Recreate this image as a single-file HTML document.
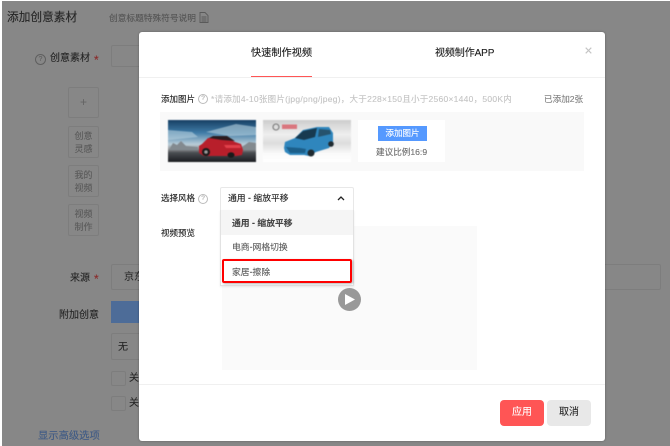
<!DOCTYPE html>
<html><head><meta charset="utf-8">
<style>
html,body{margin:0;padding:0;background:#fff}
#p{position:relative;width:670px;height:446px;overflow:hidden;background:#fff;font-family:"Liberation Sans","Noto Sans CJK SC",sans-serif;-webkit-text-stroke:.12px currentColor}
#b{position:absolute;left:2px;top:1px;width:668px;height:445px;background:#878787}
.t{position:absolute;white-space:nowrap;line-height:14px}
.a{position:absolute;box-sizing:border-box}
.bx{position:absolute;box-sizing:border-box;border:1px solid #7d7d7d;border-radius:2px}
.side{position:absolute;left:68px;width:31px;box-sizing:border-box;border:1px solid #7d7d7d;border-radius:2px;color:#5a5a5a;font-size:9px;line-height:12.5px;text-align:center;padding-top:3px}
.q{position:absolute;box-sizing:border-box;border-radius:50%;text-align:center;font-size:7px}
.im{filter:blur(.45px)}
</style></head><body><div id="p">
<div id="b"></div>

<div class="t" style="left:7px;top:10px;font-size:11.7px;line-height:16px;color:#262626">添加创意素材</div>
<div class="t" style="left:109px;top:11px;font-size:8.7px;color:#555">创意标题特殊符号说明</div>
<svg class="a" style="left:199px;top:12px" width="10" height="11" viewBox="0 0 10 11"><path d="M1 .5h5l3 3v7H1zM2.500 5h5M2.500 7h5M2.500 9h5" fill="none" stroke="#5a5a5a" stroke-width=".9"/></svg>
<div class="q" style="left:35px;top:54px;width:11px;height:11px;border:1px solid #5f5f5f;color:#5f5f5f;line-height:9px">?</div>
<div class="t" style="left:50px;top:52px;font-size:10px;color:#262626">创意素材</div>
<div class="t" style="left:94px;top:53px;font-size:12px;color:#8b2a2a">*</div>
<div class="bx" style="left:111px;top:45px;width:40px;height:22px"></div>

<div class="side" style="top:87px;height:31px;font-size:12px;line-height:29px;padding-top:0;color:#666">+</div>
<div class="side" style="top:126px;height:32px">创意<br>灵感</div>
<div class="side" style="top:165px;height:32px">我的<br>视频</div>
<div class="side" style="top:204px;height:32px">视频<br>制作</div>

<div class="t" style="left:70px;top:272px;font-size:10px;color:#262626">来源</div>
<div class="t" style="left:94px;top:272px;font-size:12px;color:#8b2a2a">*</div>
<div class="bx" style="left:111px;top:264px;width:550px;height:26px"></div>
<div class="t" style="left:124px;top:271px;font-size:10px;color:#2e2e2e">京东</div>
<div class="t" style="left:59px;top:309px;font-size:10px;color:#262626">附加创意</div>
<div class="a" style="left:111px;top:301px;width:40px;height:22px;background:#4d6c98"></div>
<div class="bx" style="left:111px;top:333px;width:50px;height:27px"></div>
<div class="t" style="left:118px;top:341px;font-size:10px;color:#262626">无</div>
<div class="bx" style="left:111px;top:371px;width:15px;height:15px"></div>
<div class="t" style="left:129px;top:372px;font-size:10px;color:#262626">关</div>
<div class="bx" style="left:111px;top:396px;width:15px;height:15px"></div>
<div class="t" style="left:129px;top:397px;font-size:10px;color:#262626">关</div>
<div class="t" style="left:38px;top:430px;font-size:10.3px;color:#3f5a85">显示高级选项</div>

<div class="a" style="left:139px;top:32px;width:466px;height:409px;background:#fff;border-radius:3px;box-shadow:0 0 2px rgba(0,0,0,.3)"></div>
<div class="a" style="left:139px;top:77px;width:466px;height:1px;background:#f0f0f0"></div>
<div class="t" style="left:251px;top:47px;font-size:10.2px;color:#1c1c1c">快速制作视频</div>
<div class="a" style="left:251px;top:76px;width:61px;height:1px;background:#f55"></div>
<div class="t" style="left:435px;top:47px;font-size:10px;letter-spacing:-.1px;color:#1c1c1c">视频制作APP</div>
<svg class="a" style="left:585px;top:47px" width="7" height="7" viewBox="0 0 7 7"><path d="M.7.7l5.600 5.600M6.300.7L.7 6.300" stroke="#c4c4c4" stroke-width="1.100"/></svg>

<div class="t" style="left:161px;top:92px;font-size:8.500px;color:#222">添加图片</div>
<div class="q" style="left:198px;top:94px;width:10px;height:10px;border:1px solid #bbb;color:#aaa;line-height:8px;font-size:6.500px">?</div>
<div class="t" style="left:211px;top:92px;font-size:8.500px;letter-spacing:.26px;color:#c4c4c4">*请添加4-10张图片(jpg/png/jpeg)，大于228×150且小于2560×1440，500K内</div>
<div class="t" style="left:544px;top:92px;font-size:8.600px;color:#808080">已添加2张</div>

<div class="a" style="left:160px;top:112px;width:424px;height:59px;background:#f9f9f9"></div>

<svg class="a im" style="left:168px;top:120px" width="88" height="42" viewBox="0 0 88 42">
<defs><linearGradient id="s" x1="0" y1="0" x2="0" y2="1"><stop offset="0" stop-color="#173f63"/><stop offset=".3" stop-color="#3f7ba6"/><stop offset=".58" stop-color="#b9cdd8"/><stop offset=".68" stop-color="#9a9c9e"/><stop offset=".78" stop-color="#4a4d52"/><stop offset="1" stop-color="#1a1c20"/></linearGradient></defs>
<rect width="88" height="42" fill="url(#s)"/>
<path d="M38 12l30-8 20 3v8l-26 1zM0 10l24 2 6 5-30 3z" fill="#b7d0de" opacity=".6"/>
<path d="M2 28l3-5 4 2 4-4 5 5 12 1v3H2zM74 27l7-5 7 1v7H74z" fill="#838a8f"/>
<path d="M31 26l3-2 6-6 18-1 9 5 6 2 2 6-1 5-6 1H36l-5-3z" fill="#b81f2b"/>
<path d="M41 18l4-2h14l8 5-13-1z" fill="#2a1c20"/>
<path d="M56 25h16l1 3H58z" fill="#e0404a"/>
<circle cx="38" cy="32" r="4" fill="#1a1a1a"/><circle cx="38" cy="32" r="1.800" fill="#9a9a9a"/>
<ellipse cx="63" cy="35" rx="3.500" ry="2.800" fill="#1a1a1a"/>
</svg>

<svg class="a im" style="left:263px;top:120px" width="88" height="42" viewBox="0 0 88 42">
<defs><linearGradient id="g" x1="0" y1="0" x2="0" y2="1"><stop offset="0" stop-color="#cdcdcd"/><stop offset=".35" stop-color="#efefef"/><stop offset=".55" stop-color="#dcdcdc"/><stop offset=".8" stop-color="#fafafa"/><stop offset="1" stop-color="#fff"/></linearGradient></defs>
<rect width="88" height="42" fill="url(#g)"/>
<circle cx="13" cy="7" r="3" fill="none" stroke="#777" stroke-width="1.100"/>
<rect x="19" y="4.500" width="15" height="4.500" fill="#d94a55" opacity=".7"/>
<path d="M21 28l1-6 10-4 8-8 14-3h12l4 6v9l-4 6-13 4-7 4-5-1H27l-5-3z" fill="#2f86bd"/>
<path d="M32 18l8-7 14-3-2 9-11 3z" fill="#173a50"/>
<path d="M56 9l11 1 1 4-13 3z" fill="#26536e"/>
<path d="M23 27l14 1 6 1-1 4H27z" fill="#1c5f8a"/>
<circle cx="48" cy="33" r="3.500" fill="#1f2a30"/><circle cx="68" cy="24" r="2.800" fill="#1f2a30"/>
</svg>

<div class="a" style="left:358px;top:120px;width:87px;height:42px;background:#fff"></div>
<div class="a" style="left:378px;top:126px;width:49px;height:15px;background:#59f;color:#fff;font-size:8.500px;line-height:15px;text-align:center">添加图片</div>
<div class="t" style="left:376px;top:145px;font-size:8.600px;color:#6e6e6e">建议比例16:9</div>

<div class="t" style="left:161px;top:191px;font-size:8.500px;color:#222">选择风格</div>
<div class="q" style="left:198px;top:194px;width:10px;height:10px;border:1px solid #bbb;color:#aaa;line-height:8px;font-size:6.500px">?</div>
<div class="t" style="left:161px;top:226px;font-size:8.500px;color:#222">视频预览</div>

<div class="a" style="left:222px;top:226px;width:255px;height:144px;background:#fafafa"></div>
<div class="a" style="left:338px;top:288px;width:23px;height:23px;border-radius:50%;background:#999"></div>
<svg class="a" style="left:344px;top:293px" width="12" height="13" viewBox="0 0 12 13"><path d="M1 1v11l10-5.500z" fill="#fff"/></svg>

<div class="a" style="left:220px;top:187px;width:134px;height:24px;background:#fff;border:1px solid #e8e8e8;border-radius:2px 2px 0 0"></div>
<div class="t" style="left:228px;top:191px;font-size:8.800px;color:#222">通用 - 缩放平移</div>
<svg class="a" style="left:337px;top:195px" width="8" height="6" viewBox="0 0 8 6"><path d="M1 5l3-3 3 3" fill="none" stroke="#222" stroke-width="1.300"/></svg>
<div class="a" style="left:220px;top:210px;width:134px;height:76px;background:#fff;border:1px solid #e2e2e2;border-top:0;box-shadow:0 1px 2px rgba(0,0,0,.08)"></div>
<div class="a" style="left:221px;top:210px;width:132px;height:25px;background:#f5f5f5"></div>
<div class="t" style="left:232px;top:216px;font-size:8.800px;font-weight:bold;color:#444">通用 - 缩放平移</div>
<div class="t" style="left:232px;top:240px;font-size:8.800px;color:#5c5c5c">电商-网格切换</div>
<div class="t" style="left:232px;top:265px;font-size:8.800px;color:#5c5c5c">家居-擦除</div>
<div class="a" style="left:222px;top:259px;width:130px;height:24px;border:2px solid #f00;border-radius:2px;box-shadow:1px 1px 2px rgba(0,0,0,.3)"></div>

<div class="a" style="left:139px;top:384px;width:466px;height:1px;background:#f0f0f0"></div>
<div class="a" style="left:500px;top:400px;width:44px;height:26px;border-radius:4px;background:#f55;color:#fff;font-size:10px;line-height:26px;text-align:center">应用</div>
<div class="a" style="left:547px;top:400px;width:44px;height:26px;border-radius:4px;background:#e8e8e8;color:#2a2a2a;font-size:10px;line-height:26px;text-align:center">取消</div>
</div></body></html>
